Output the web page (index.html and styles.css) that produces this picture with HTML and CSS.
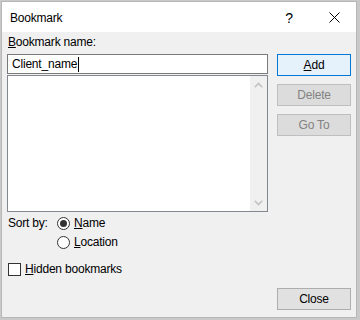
FILE: index.html
```html
<!DOCTYPE html>
<html>
<head>
<meta charset="utf-8">
<link rel="stylesheet" href="styles.css">
</head>
<body>
<div class="window">
  <div class="titlebar">
    <span class="title">Bookmark</span>
    <span class="tb-btn help">?</span>
    <span class="tb-btn close"><svg width="11" height="11" viewBox="0 0 11 11"><path d="M0.5 0.5L10.5 10.5M10.5 0.5L0.5 10.5" stroke="#000" stroke-width="1" fill="none"/></svg></span>
  </div>
  <div class="content">
    <div class="left">
      <div class="label"><u>B</u>ookmark name:</div>
      <div class="input"><span>Client_name</span><span class="caret"></span></div>
      <div class="listbox">
        <div class="list-area"></div>
        <div class="scrollbar">
          <span class="arrow"><svg width="9" height="6" viewBox="0 0 9 6"><path d="M0.8 5.2L4.5 1.5L8.2 5.2" stroke="#c2c2c2" stroke-width="1.6" fill="none"/></svg></span>
          <span class="arrow"><svg width="9" height="6" viewBox="0 0 9 6"><path d="M0.8 0.8L4.5 4.5L8.2 0.8" stroke="#c2c2c2" stroke-width="1.6" fill="none"/></svg></span>
        </div>
      </div>
      <div class="sort">
        <div class="sort-label">Sort by:</div>
        <div class="radios">
          <div class="opt-row"><span class="radio checked"></span><span><u>N</u>ame</span></div>
          <div class="opt-row"><span class="radio"></span><span><u>L</u>ocation</span></div>
        </div>
      </div>
      <div class="opt-row check-row"><span class="checkbox"></span><span><u>H</u>idden bookmarks</span></div>
    </div>
    <div class="right">
      <div class="btn default"><span><u>A</u>dd</span></div>
      <div class="btn disabled">Delete</div>
      <div class="btn disabled">Go To</div>
      <div class="btn close-btn">Close</div>
    </div>
  </div>
</div>
</body>
</html>
```

FILE: styles.css
```css
html, body {
  margin: 0;
  padding: 0;
  background: #c9c9c9;
  width: 360px;
  height: 320px;
  overflow: hidden;
}
body {
  font-family: "Liberation Sans", Arial, sans-serif;
  font-size: 12px;
  letter-spacing: -0.2px;
  color: #000;
}
u { text-decoration: underline; text-underline-offset: 1px; }
.window {
  margin: 1px 0 0 1px;
  width: 356px;
  height: 317px;
  box-sizing: border-box;
  border: 1px solid #b7b7b7;
  background: #f0f0f0;
  display: flex;
  flex-direction: column;
}
.titlebar {
  height: 30px;
  background: #fff;
  display: flex;
  align-items: center;
  flex: none;
}
.title {
  flex: 1;
  padding-left: 8px;
  font-size: 12px;
  line-height: 16px;
  padding-top: 1px;
}
.tb-btn {
  height: 30px;
  display: flex;
  align-items: center;
  justify-content: center;
  color: #000;
}
.help {
  width: 46px;
  font-size: 14px;
  font-family: "Liberation Sans", Arial, sans-serif;
  padding-top: 1px;
  box-sizing: border-box;
}
.close { width: 44px; padding-top: 1px; box-sizing: border-box; }
.content {
  flex: 1;
  display: flex;
  gap: 9px;
  padding: 2px 5px 7px 5px;
  box-sizing: border-box;
}
.left {
  width: 261px;
  display: flex;
  flex-direction: column;
}
.label {
  line-height: 16px;
  margin-bottom: 4px;
  padding-left: 1px;
}
.input {
  height: 20px;
  box-sizing: border-box;
  border: 1px solid #7a7a7a;
  background: #fff;
  display: flex;
  align-items: center;
  padding-left: 4px;
  line-height: 16px;
}
.caret {
  display: inline-block;
  width: 1px;
  height: 15px;
  background: #000;
  margin-left: 1px;
}
.listbox {
  margin-top: 1px;
  height: 137px;
  box-sizing: border-box;
  border: 1px solid #828790;
  background: #fff;
  display: flex;
}
.list-area { flex: 1; }
.scrollbar {
  width: 17px;
  background: #f0f0f0;
  display: flex;
  flex-direction: column;
  justify-content: space-between;
}
.arrow {
  height: 17px;
  display: flex;
  align-items: center;
  justify-content: center;
}
.sort {
  margin-top: 3px;
  display: flex;
}
.sort-label {
  width: 49px;
  line-height: 16px;
  padding-left: 1px;
}
.radios {
  display: flex;
  flex-direction: column;
  gap: 3px;
}
.opt-row {
  display: flex;
  align-items: center;
  line-height: 16px;
  gap: 4px;
}
.radio {
  width: 13px;
  height: 13px;
  box-sizing: border-box;
  border: 1px solid #333;
  border-radius: 50%;
  background: #fff;
  display: flex;
  align-items: center;
  justify-content: center;
}
.radio.checked::after {
  content: "";
  width: 7px;
  height: 7px;
  border-radius: 50%;
  background: #333;
}
.check-row {
  margin-top: 11px;
  padding-left: 1px;
}
.checkbox {
  width: 13px;
  height: 13px;
  box-sizing: border-box;
  border: 1px solid #333;
  background: #fff;
}
.right {
  width: 74px;
  padding-top: 20px;
  display: flex;
  flex-direction: column;
  gap: 8px;
}
.btn {
  height: 22px;
  box-sizing: border-box;
  border: 1px solid #adadad;
  background: #e1e1e1;
  display: flex;
  align-items: center;
  justify-content: center;
  line-height: 16px;
}
.btn.default {
  border-color: #0078d7;
  background: #e5f1fb;
}
.btn.disabled {
  color: #838383;
  background: #dcdcdc;
  border-color: #bfbfbf;
}
.close-btn { margin-top: auto; }
```
